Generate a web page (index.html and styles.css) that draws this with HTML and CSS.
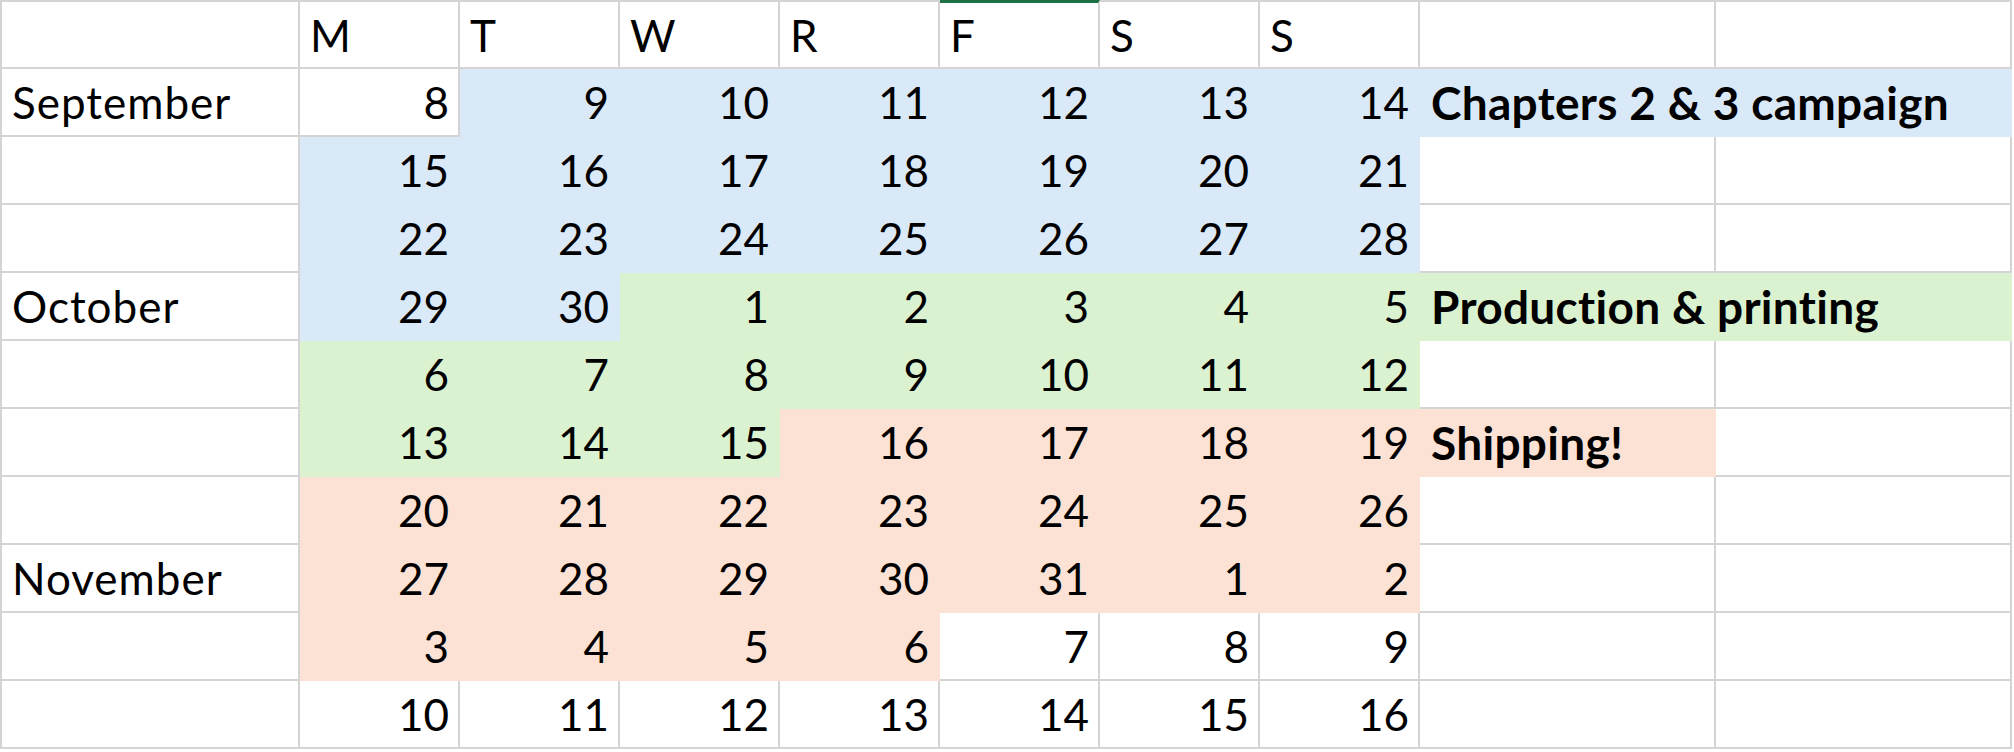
FILE: index.html
```html
<!DOCTYPE html>
<html lang="en">
<head>
<meta charset="utf-8">
<title>Schedule</title>
<link rel="stylesheet" href="styles.css">
</head>
<body>
<div class="sheet">
  <div class="c hd first"></div>
  <div class="c hd">M</div>
  <div class="c hd">T</div>
  <div class="c hd">W</div>
  <div class="c hd">R</div>
  <div class="c hd sel">F</div>
  <div class="c hd">S</div>
  <div class="c hd">S</div>
  <div class="c hd"></div>
  <div class="c hd"></div>

  <div class="c first mon">September</div>
  <div class="c n">8</div>
  <div class="c n b">9</div>
  <div class="c n b">10</div>
  <div class="c n b">11</div>
  <div class="c n b">12</div>
  <div class="c n b">13</div>
  <div class="c n b">14</div>
  <div class="c lbl b span2">Chapters 2 &amp; 3 campaign</div>

  <div class="c first"></div>
  <div class="c n b">15</div>
  <div class="c n b">16</div>
  <div class="c n b">17</div>
  <div class="c n b">18</div>
  <div class="c n b">19</div>
  <div class="c n b">20</div>
  <div class="c n b">21</div>
  <div class="c"></div>
  <div class="c"></div>

  <div class="c first"></div>
  <div class="c n b">22</div>
  <div class="c n b">23</div>
  <div class="c n b">24</div>
  <div class="c n b">25</div>
  <div class="c n b">26</div>
  <div class="c n b">27</div>
  <div class="c n b">28</div>
  <div class="c"></div>
  <div class="c"></div>

  <div class="c first mon">October</div>
  <div class="c n b">29</div>
  <div class="c n b">30</div>
  <div class="c n g">1</div>
  <div class="c n g">2</div>
  <div class="c n g">3</div>
  <div class="c n g">4</div>
  <div class="c n g">5</div>
  <div class="c lbl g span2">Production &amp; printing</div>

  <div class="c first"></div>
  <div class="c n g">6</div>
  <div class="c n g">7</div>
  <div class="c n g">8</div>
  <div class="c n g">9</div>
  <div class="c n g">10</div>
  <div class="c n g">11</div>
  <div class="c n g">12</div>
  <div class="c"></div>
  <div class="c"></div>

  <div class="c first"></div>
  <div class="c n g">13</div>
  <div class="c n g">14</div>
  <div class="c n g">15</div>
  <div class="c n p">16</div>
  <div class="c n p">17</div>
  <div class="c n p">18</div>
  <div class="c n p">19</div>
  <div class="c lbl p">Shipping!</div>
  <div class="c"></div>

  <div class="c first"></div>
  <div class="c n p">20</div>
  <div class="c n p">21</div>
  <div class="c n p">22</div>
  <div class="c n p">23</div>
  <div class="c n p">24</div>
  <div class="c n p">25</div>
  <div class="c n p">26</div>
  <div class="c"></div>
  <div class="c"></div>

  <div class="c first mon">November</div>
  <div class="c n p">27</div>
  <div class="c n p">28</div>
  <div class="c n p">29</div>
  <div class="c n p">30</div>
  <div class="c n p">31</div>
  <div class="c n p">1</div>
  <div class="c n p">2</div>
  <div class="c"></div>
  <div class="c"></div>

  <div class="c first"></div>
  <div class="c n p">3</div>
  <div class="c n p">4</div>
  <div class="c n p">5</div>
  <div class="c n p">6</div>
  <div class="c n">7</div>
  <div class="c n">8</div>
  <div class="c n">9</div>
  <div class="c"></div>
  <div class="c"></div>

  <div class="c first"></div>
  <div class="c n">10</div>
  <div class="c n">11</div>
  <div class="c n">12</div>
  <div class="c n">13</div>
  <div class="c n">14</div>
  <div class="c n">15</div>
  <div class="c n">16</div>
  <div class="c"></div>
  <div class="c"></div>
</div>
</body>
</html>
```

FILE: styles.css
```css
* { box-sizing: border-box; }

html, body {
  margin: 0;
  padding: 0;
  background: #ffffff;
}

body {
  width: 2014px;
  height: 752px;
  overflow: hidden;
  font-family: "Lato", "Noto Sans", sans-serif;
  font-size: 44px;
  color: #000000;
}

.sheet {
  display: grid;
  grid-template-columns: 300px repeat(7, 160px) 296px 296px;
  grid-template-rows: 69px;
  grid-auto-rows: 68px;
  width: 2012px;
}

.c {
  display: flex;
  align-items: center;
  padding: 0 9px 0 10px;
  white-space: nowrap;
  border-right: 2px solid #d4d4d4;
  border-bottom: 2px solid #d4d4d4;
  line-height: normal;
}

.first { border-left: 2px solid #d4d4d4; }

.mon { letter-spacing: 1px; }

.hd { border-top: 2px solid #d4d4d4; }

.sel { border-top: 3px solid #1e7145; }

.n { justify-content: flex-end; }

.lbl {
  font-size: 46px;
  font-weight: 700;
  letter-spacing: 0.3px;
  padding-left: 11px;
}

.span2 { grid-column: span 2; }

.b { background: #dae9f8; border-color: #dae9f8; }
.g { background: #daf2d0; border-color: #daf2d0; }
.p { background: #fbe2d5; border-color: #fbe2d5; }
```
